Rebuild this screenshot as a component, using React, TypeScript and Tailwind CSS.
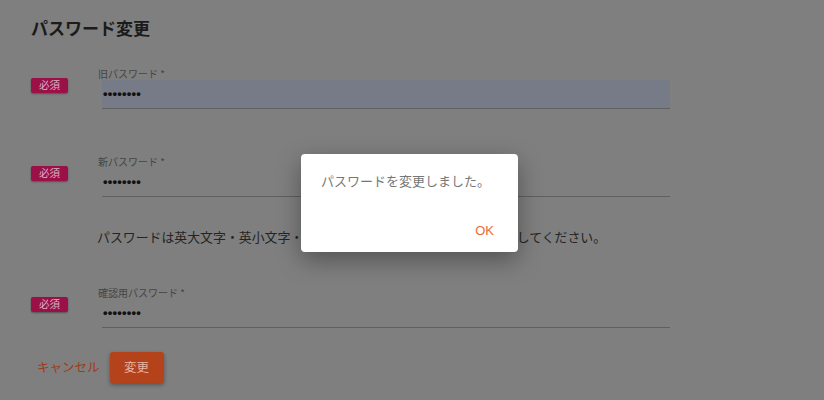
import React from "react";

const jp = "font-['Noto_Sans_CJK_JP','Noto_Sans',sans-serif]";

function RequiredBadge() {
  return (
    <span className="flex h-[15px] w-[37px] items-center justify-center rounded-[2px] bg-[#9a1047] text-[10.5px] leading-none text-[#dcb0c1] shadow-[0_1px_2px_rgba(0,0,0,0.35)]">
      必須
    </span>
  );
}

function PasswordField({ label, filled }: { label: string; filled?: boolean }) {
  return (
    <div className="flex items-start">
      <div className="w-[98px] shrink-0 pl-[31px] pt-[11px]">
        <RequiredBadge />
      </div>
      <div className="w-[572px]">
        <div className="h-[13px] text-[10px] leading-[13px] text-[#444]">{label} *</div>
        <div
          className={
            "ml-[4px] flex h-[29px] items-center border-b border-[#5f5f5f] pl-[1px] " + (filled ? "bg-[#777a87]" : "")
          }
        >
          <span className="font-['Liberation_Sans',sans-serif] text-[13px] font-bold tracking-[0.2px] text-[#111]">
            ••••••••
          </span>
        </div>
      </div>
    </div>
  );
}

export default function App() {
  return (
    <div className={"relative h-[400px] w-[824px] overflow-hidden bg-[#7f7f7f] " + jp}>
      <div className="pt-[17px]">
        <h1 className="pl-[31px] text-[17px] font-bold leading-[22px] text-[#1b1b1b]">パスワード変更</h1>

        <div className="mt-[28px]">
          <PasswordField label="旧パスワード" filled />
        </div>
        <div className="mt-[46px]">
          <PasswordField label="新パスワード" />
        </div>
        <p className="mt-[32px] pl-[97px] text-[12.9px] leading-[16px] text-[#242424]">
          パスワードは英大文字・英小文字・数字を組み合わせた8文字以上で設定してください。
        </p>
        <div className="mt-[41px]">
          <PasswordField label="確認用パスワード" />
        </div>

        <div className="mt-[24px] flex items-center pl-[37px]">
          <button className="text-[12.5px] text-[#a03a16]">キャンセル</button>
          <button className="ml-[10px] h-[31px] w-[54px] rounded-[3px] bg-[#b4431b] text-[12.5px] text-[#e6b3a3] shadow-[0_2px_4px_rgba(0,0,0,0.35)]">
            変更
          </button>
        </div>
      </div>

      <div className="absolute left-[301px] top-[154px] h-[98px] w-[217px] rounded-[4px] bg-white shadow-[0_8px_24px_rgba(0,0,0,0.35)]">
        <p className="pl-[20px] pt-[18px] text-[13px] leading-[18px] text-[#777]">パスワードを変更しました。</p>
        <div className="flex justify-end pr-[24px] pt-[33px]">
          <button className="font-['Liberation_Sans',sans-serif] text-[13px] leading-[16px] text-[#ee6a36]">OK</button>
        </div>
      </div>
    </div>
  );
}
